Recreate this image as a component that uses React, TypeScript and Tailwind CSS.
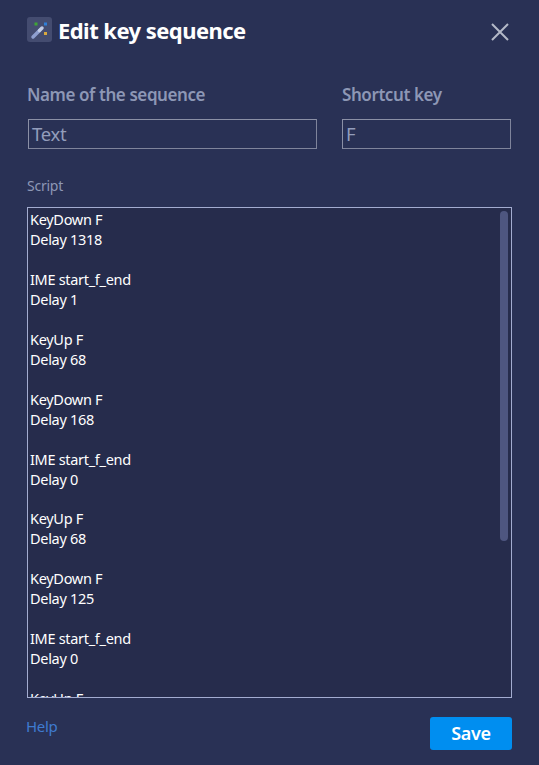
const SCRIPT = [
  ["KeyDown F", "Delay 1318"],
  ["IME start_f_end", "Delay 1"],
  ["KeyUp F", "Delay 68"],
  ["KeyDown F", "Delay 168"],
  ["IME start_f_end", "Delay 0"],
  ["KeyUp F", "Delay 68"],
  ["KeyDown F", "Delay 125"],
  ["IME start_f_end", "Delay 0"],
  ["KeyUp F", "Delay 68"],
];

function WandIcon() {
  return (
    <svg width="25" height="25" viewBox="0 0 25 25" className="block shrink-0">
      <rect width="25" height="25" rx="3" fill="#444c70" />
      <rect x="7.5" y="5.5" width="3" height="3" fill="#3fa535" />
      <rect x="17" y="5.5" width="3" height="3" fill="#2f7fd8" />
      <rect x="17" y="15" width="3" height="3" fill="#d9a93f" />
      <path d="M6 20 L12.5 13.5" stroke="#8f9fcf" strokeWidth="3.5" strokeLinecap="round" />
      <path d="M12.5 13.5 L15 11" stroke="#c3cce6" strokeWidth="3.5" strokeLinecap="round" />
    </svg>
  );
}

export default function App() {
  return (
    <div
      className="h-[765px] w-[539px] overflow-hidden bg-[#293155] px-[27px]"
      style={{ fontFamily: '"Noto Sans", "Open Sans", sans-serif' }}
    >
      <div className="flex h-[46px] items-start justify-between pt-[17px]">
        <div className="flex items-start gap-[6px]">
          <WandIcon />
          <h1 className="-mt-[1px] text-[22px] leading-[28px] font-bold tracking-[-0.55px] text-white">Edit key sequence</h1>
        </div>
        <svg width="18" height="18" viewBox="0 0 18 18" className="mt-[6px] mr-[3px]">
          <path d="M1 1 L17 17 M17 1 L1 17" stroke="#b4b9c8" strokeWidth="2" fill="none" />
        </svg>
      </div>

      <div className="mt-[37px] flex gap-[25px]">
        <div className="w-[290px]">
          <label className="block text-[17px] leading-[24px] font-semibold tracking-[-0.42px] text-[#8d97b5]">
            Name of the sequence
          </label>
          <div className="mt-[12px] ml-[1px] flex h-[30px] w-[289px] items-center border border-[#7f849b] border-t-[#8b90a6] border-l-[#8b90a6] px-[3px] text-[18.5px] tracking-[-0.3px] text-[#939dbb]">
            Text
          </div>
        </div>
        <div className="w-[169px]">
          <label className="block text-[17px] leading-[24px] font-semibold tracking-[-0.42px] text-[#8d97b5]">
            Shortcut key
          </label>
          <div className="mt-[12px] flex h-[30px] w-[169px] items-center border border-[#7f849b] border-t-[#8b90a6] border-l-[#8b90a6] px-[3px] text-[18.5px] text-[#939dbb]">
            F
          </div>
        </div>
      </div>

      <div className="mt-[27px] text-[14px] leading-[20px] tracking-[-0.25px] text-[#8d97b5]">Script</div>
      <div className="relative mt-[11px] h-[491px] w-[485px] overflow-hidden border border-[#a3acd0] bg-[#262c4c] px-[2px] pt-[1px]">
        {SCRIPT.map((group, i) => (
          <div key={i} className="mb-[19.9px] text-[14.5px] leading-[20px] tracking-[-0.3px] text-white">
            {group.map((line, j) => (
              <div key={j}>{line}</div>
            ))}
          </div>
        ))}
        <div className="absolute top-[3px] right-[3px] h-[330px] w-[8px] rounded-full bg-[#4e5680]" />
      </div>

      <div className="mt-[19px] flex items-start justify-between">
        <a className="-mt-[1px] -ml-[1px] text-[15px] leading-[20px] tracking-[-0.35px] text-[#3f7bd0]">Help</a>
        <button className="h-[33px] w-[82px] rounded-[3px] bg-[#008ef0] text-[18px] font-semibold tracking-[-0.3px] text-white">
          Save
        </button>
      </div>
    </div>
  );
}
